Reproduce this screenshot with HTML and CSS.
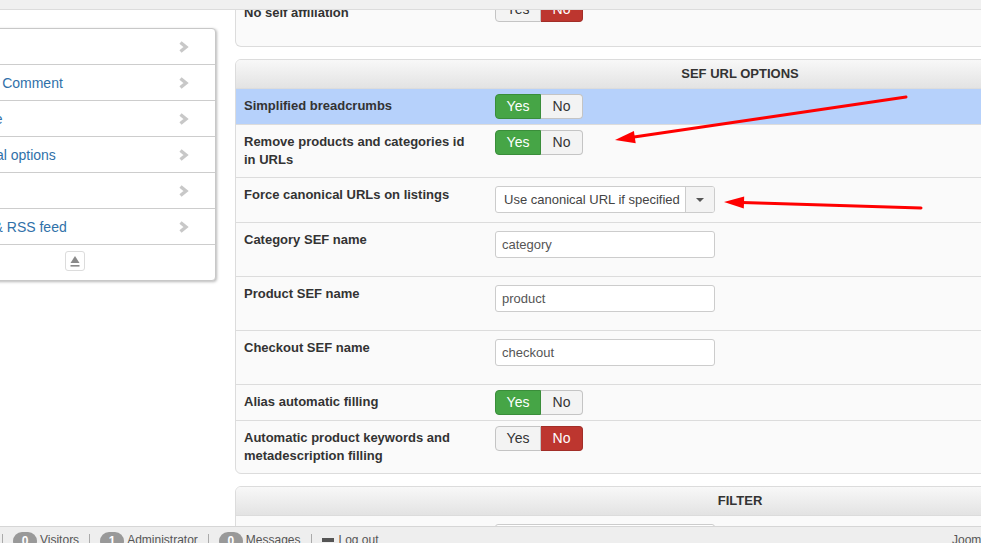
FILE: index.html
```html
<!DOCTYPE html>
<html lang="en">
<head>
  <meta charset="UTF-8">
  <title>Configuration - Features</title>
  <link rel="stylesheet" href="styles.css">
</head>
<body>

<div class="subhead"></div>

<div class="workspace">
  <!-- section menu on the left -->
  <ul class="side-nav">
    <li><a href="#main">Main</a><svg class="chev" viewBox="0 0 11 12"><path d="M2.5 1.5 L8 6 L2.5 10.5"/></svg></li>
    <li><a href="#vote">Vote &amp; Comment</a><svg class="chev" viewBox="0 0 11 12"><path d="M2.5 1.5 L8 6 L2.5 10.5"/></svg></li>
    <li><a href="#affiliate">Affiliate</a><svg class="chev" viewBox="0 0 11 12"><path d="M2.5 1.5 L8 6 L2.5 10.5"/></svg></li>
    <li><a href="#general">General options</a><svg class="chev" viewBox="0 0 11 12"><path d="M2.5 1.5 L8 6 L2.5 10.5"/></svg></li>
    <li><a href="#filter">Filter</a><svg class="chev" viewBox="0 0 11 12"><path d="M2.5 1.5 L8 6 L2.5 10.5"/></svg></li>
    <li><a href="#feeds">Atom &amp; RSS feed</a><svg class="chev" viewBox="0 0 11 12"><path d="M2.5 1.5 L8 6 L2.5 10.5"/></svg></li>
    <li class="nav-foot">
      <button class="to-top" title="Back to top">
        <svg viewBox="0 0 12 14" width="12" height="14"><path d="M6 2 L10.5 9 L1.5 9 Z" fill="#8a8a8a"/><rect x="1.5" y="11" width="9" height="1.6" fill="#8a8a8a"/></svg>
      </button>
    </li>
  </ul>

  <div class="config">
    <!-- affiliate block, tail end -->
    <div class="panel panel-cut">
      <div class="row">
        <div class="key key-low">No self affiliation</div>
        <div class="yesno"><span class="btn">Yes</span><span class="btn on-no">No</span></div>
      </div>
    </div>

    <div class="panel">
      <div class="panel-head">SEF URL options</div>
      <div class="row hl">
        <div class="key">Simplified breadcrumbs</div>
        <div class="yesno"><span class="btn on-yes">Yes</span><span class="btn">No</span></div>
      </div>
      <div class="row">
        <div class="key">Remove products and categories id in URLs</div>
        <div class="yesno"><span class="btn on-yes">Yes</span><span class="btn">No</span></div>
      </div>
      <div class="row">
        <div class="key">Force canonical URLs on listings</div>
        <div class="chosen">
          <span class="chosen-text">Use canonical URL if specified</span>
          <span class="chosen-drop"><b class="caret"></b></span>
        </div>
      </div>
      <div class="row">
        <div class="key">Category SEF name</div>
        <input class="field" type="text" value="category">
      </div>
      <div class="row">
        <div class="key">Product SEF name</div>
        <input class="field" type="text" value="product">
      </div>
      <div class="row">
        <div class="key">Checkout SEF name</div>
        <input class="field" type="text" value="checkout">
      </div>
      <div class="row">
        <div class="key">Alias automatic filling</div>
        <div class="yesno"><span class="btn on-yes">Yes</span><span class="btn">No</span></div>
      </div>
      <div class="row">
        <div class="key">Automatic product keywords and metadescription filling</div>
        <div class="yesno"><span class="btn">Yes</span><span class="btn on-no">No</span></div>
      </div>
    </div>

    <div class="panel">
      <div class="panel-head">Filter</div>
      <div class="row">
        <div class="key">Filter button position</div>
        <input class="field" type="text" value="">
      </div>
    </div>
  </div>
</div>

<footer class="status">
  <div class="status-items">
    <span class="sep"></span>
    <span class="stat"><span class="badge">0</span>Visitors</span>
    <span class="sep"></span>
    <span class="stat"><span class="badge">1</span>Administrator</span>
    <span class="sep"></span>
    <span class="stat"><span class="badge">0</span>Messages</span>
    <span class="sep"></span>
    <a class="stat logout" href="#logout"><span class="minus"></span>Log out</a>
  </div>
  <div class="copyright">Joomla! 3.8.5 &mdash; &copy; 2018 Shop</div>
</footer>

<!-- red pointer arrows drawn on top -->
<svg class="marks" width="981" height="543" viewBox="0 0 981 543">
  <line x1="906" y1="97" x2="634" y2="137" stroke="#f00" stroke-width="3" stroke-linecap="round"/>
  <polygon points="615,140 635.7,143.2 633.9,131" fill="#f00"/>
  <line x1="921" y1="208" x2="742" y2="202.6" stroke="#f00" stroke-width="3" stroke-linecap="round"/>
  <polygon points="724,202 744.2,196.4 743.8,208.6" fill="#f00"/>
</svg>

</body>
</html>
```

FILE: styles.css
```css
/* reset + base */
* {
  margin: 0;
  padding: 0;
  box-sizing: border-box;
}
html, body {
  width: 100%;
  height: 100%;
  overflow: hidden;
}
body {
  font-family: "Liberation Sans", Arial, sans-serif;
  font-size: 13px;
  color: #333;
  background: #fff;
  display: flex;
  flex-direction: column;
}

/* grey strip under the toolbar */
.subhead {
  flex: none;
  height: 10px;
  background: #f0f0f0;
  border-bottom: 1px solid #dcdcdc;
}

.workspace {
  flex: 1;
  min-height: 0;
  display: flex;
  align-items: flex-start;
  overflow: hidden;
}

/* left section menu */
.side-nav {
  flex: none;
  width: 282px;
  margin: 18px 0 0 -66px;
  list-style: none;
  background: #fff;
  border: 1px solid #c8c8c8;
  border-radius: 4px;
  box-shadow: 1px 1px 3px rgba(0, 0, 0, 0.28);
}
.side-nav li {
  display: flex;
  align-items: center;
  justify-content: space-between;
  height: 36px;
  padding: 0 26px 0 22px;
  border-bottom: 1px solid #cdcdcd;
  font-size: 14px;
}
.side-nav a {
  color: #3071a9;
  text-decoration: none;
}
.side-nav .chev {
  width: 11px;
  height: 12px;
  fill: none;
  stroke: #c8c8c8;
  stroke-width: 3.4;
}
.side-nav .nav-foot {
  height: 35px;
  border-bottom: 0;
  justify-content: center;
  padding: 0;
}
.to-top {
  width: 20px;
  height: 20px;
  margin-top: -3px;
  display: flex;
  align-items: center;
  justify-content: center;
  background: #fff;
  border: 1px solid #dcdcdc;
  border-radius: 3px;
  cursor: pointer;
}

/* configuration column */
.config {
  flex: none;
  width: 1010px;
  margin: -18px 0 0 19px;
}
.panel {
  background: #fafafa;
  border: 1px solid #dcdcdc;
  border-radius: 6px;
  margin-bottom: 12px;
  overflow: hidden;
}
.panel-cut {
  border-top: 0;
  border-radius: 0 0 6px 6px;
}
.panel-cut .row {
  padding-bottom: 21px;
}
.panel-head {
  height: 29px;
  line-height: 28px;
  text-align: center;
  text-transform: uppercase;
  font-weight: bold;
  color: #333;
  background: linear-gradient(#f8f8f8, #e3e3e3);
  border-bottom: 1px solid #dcdcdc;
}

.row {
  display: flex;
  align-items: flex-start;
  padding: 5px 8px;
  border-top: 1px solid #dcdcdc;
}
.panel-head + .row,
.panel-cut .row:first-child {
  border-top: 0;
}
.row.hl {
  background: #b6d1fb;
}
.key {
  flex: none;
  width: 228px;
  margin-right: 23px;
  padding: 3px 0;
  font-weight: bold;
  line-height: 18px;
}
.key-low {
  padding-top: 7px;
}

/* yes / no switch */
.yesno {
  display: flex;
}
.btn {
  height: 25px;
  line-height: 23px;
  text-align: center;
  font-size: 14px;
  color: #333;
  background: #f3f3f3;
  border: 1px solid #c4c4c4;
}
.btn:first-child {
  width: 46px;
  border-radius: 4px 0 0 4px;
}
.btn:last-child {
  width: 42px;
  border-left: 0;
  border-radius: 0 4px 4px 0;
}
.btn.on-yes {
  background: #46a546;
  border-color: #3a8d3a;
  color: #fff;
}
.btn.on-no {
  background: #bd362f;
  border-color: #a22e28;
  color: #fff;
}

/* text inputs */
.field {
  width: 220px;
  height: 27px;
  margin: 3px 0 13px;
  padding: 0 6px;
  font-family: "Liberation Sans", Arial, sans-serif;
  font-size: 13px;
  color: #555;
  background: #fff;
  border: 1px solid #ccc;
  border-radius: 3px;
}

/* dropdown */
.chosen {
  display: flex;
  width: 220px;
  height: 27px;
  margin: 3px 0 4px;
  background: #fff;
  border: 1px solid #ccc;
  border-radius: 3px;
  color: #444;
  overflow: hidden;
}
.chosen-text {
  flex: 1;
  padding-left: 8px;
  line-height: 25px;
  white-space: nowrap;
  overflow: hidden;
}
.chosen-drop {
  flex: none;
  width: 29px;
  display: flex;
  align-items: center;
  justify-content: center;
  background: #f3f3f3;
  border-left: 1px solid #ccc;
}
.caret {
  width: 0;
  height: 0;
  border-left: 4px solid transparent;
  border-right: 4px solid transparent;
  border-top: 4px solid #555;
}

/* status bar */
.status {
  flex: none;
  height: 17px;
  display: flex;
  align-items: flex-start;
  padding-top: 4px;
  background: #eeeeee;
  border-top: 1px solid #d6d6d6;
  font-size: 12px;
  color: #555;
  white-space: nowrap;
  overflow: hidden;
}
.status-items {
  flex: none;
  width: 952px;
  display: flex;
  align-items: flex-start;
  padding-left: 2px;
}
.sep {
  width: 1px;
  height: 14px;
  margin-top: 3px;
  background: #aaa;
}
.stat {
  display: flex;
  align-items: flex-start;
  margin: 0 10px;
  line-height: 18px;
  color: #555;
  text-decoration: none;
}
.badge {
  width: 24px;
  height: 18px;
  margin: 1px 3px 0 0;
  border-radius: 9px;
  background: #999;
  color: #fff;
  font-weight: bold;
  text-align: center;
}
.logout .minus {
  width: 12px;
  height: 4px;
  margin: 7px 5px 0 0;
  background: #555;
}
.copyright {
  flex: none;
  line-height: 18px;
}

/* annotation layer */
.marks {
  position: fixed;
  top: 0;
  left: 0;
  pointer-events: none;
}
```
